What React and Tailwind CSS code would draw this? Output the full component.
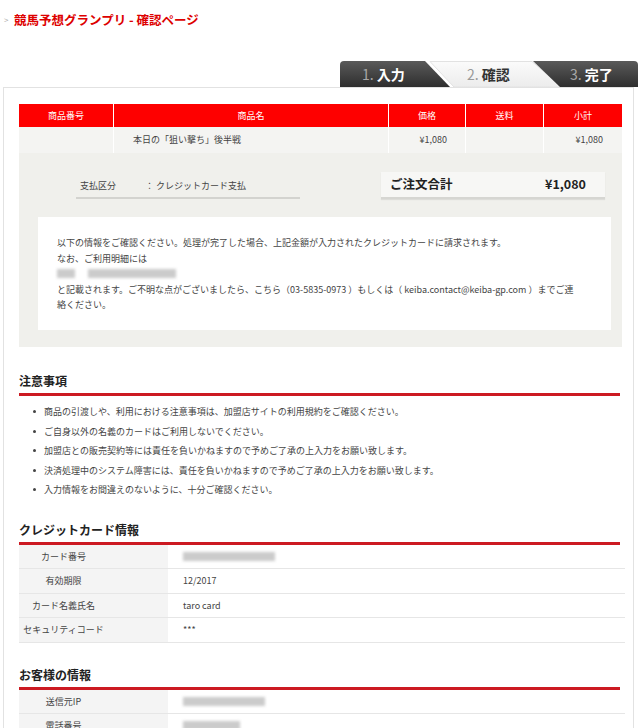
import React from 'react';

const font = { fontFamily: '"Noto Sans CJK JP", "Noto Sans", sans-serif' };

function Blur({ w, className = '' }) {
  return <span className={`inline-block h-[9px] bg-[#cbcbcb] blur-[1.5px] ${className}`} style={{ width: w }} />;
}

function Tabs() {
  return (
    <div className="relative ml-auto mr-[2px] w-[298px] h-[26px]">
      <svg width="298" height="26" className="absolute inset-0">
        <defs>
          <linearGradient id="dk" x1="0" y1="0" x2="0" y2="1">
            <stop offset="0" stopColor="#5a5a5a" />
            <stop offset="1" stopColor="#2e2e2e" />
          </linearGradient>
          <linearGradient id="lt" x1="0" y1="0" x2="0" y2="1">
            <stop offset="0" stopColor="#fbfbfb" />
            <stop offset="1" stopColor="#ececec" />
          </linearGradient>
        </defs>
        <path d="M90 0.5 L192 0.5 L222 26 L114 26 Z" fill="url(#lt)" stroke="#e2e2e2" />
        <path d="M0 26 L0 4 Q0 0 4 0 L85 0 L110 26 Z" fill="url(#dk)" />
        <path d="M193 0 L294 0 Q298 0 298 4 L298 26 L220 26 Z" fill="url(#dk)" />
      </svg>
      <span className="absolute left-[22px] top-[4px] text-[14px] leading-[18px]">
        <span className="text-[#a8a8a8]">1. </span>
        <span className="text-white font-bold">入力</span>
      </span>
      <span className="absolute left-[127px] top-[4px] text-[14px] leading-[18px]">
        <span className="text-[#9a9a9a]">2. </span>
        <span className="text-[#333] font-bold">確認</span>
      </span>
      <span className="absolute left-[230px] top-[4px] text-[14px] leading-[18px]">
        <span className="text-[#a8a8a8]">3. </span>
        <span className="text-white font-bold">完了</span>
      </span>
    </div>
  );
}

function SectionTitle({ children }) {
  return (
    <div className="mr-[2px]">
      <h2 className="text-[12px] font-bold text-[#222] leading-[16px] pb-[4px]">{children}</h2>
      <div className="h-[3px] bg-[#cc1a22]" />
    </div>
  );
}

function InfoRow({ label, children }) {
  return (
    <div className="flex h-[24.5px] border-b border-[#e6e6e6] text-[9px] text-[#444]">
      <div className="w-[149px] bg-[#f4f4f4] pr-[60px] flex items-center justify-center whitespace-nowrap">{label}</div>
      <div className="flex-1 pl-[15px] flex items-center">{children}</div>
    </div>
  );
}

export default function App() {
  const notes = [
    '商品の引渡しや、利用における注意事項は、加盟店サイトの利用規約をご確認ください。',
    'ご自身以外の名義のカードはご利用しないでください。',
    '加盟店との販売契約等には責任を負いかねますので予めご了承の上入力をお願い致します。',
    '決済処理中のシステム障害には、責任を負いかねますので予めご了承の上入力をお願い致します。',
    '入力情報をお間違えのないように、十分ご確認ください。',
  ];

  return (
    <div className="min-h-screen bg-white" style={font}>
      <div className="flex items-center pt-[12px] pl-[4px] h-[28px]">
        <span className="text-[#aaa] text-[8px] w-[10px]">&gt;</span>
        <h1 className="text-[12.5px] font-bold text-[#dd0000] leading-[16px]">競馬予想グランプリ - 確認ページ</h1>
      </div>

      <div className="mt-[33px]">
        <Tabs />
      </div>

      <div className="ml-[3px] mr-[6px] border border-[#e2e2e2] pt-[16px] pl-[15px] pr-[11px] pb-[10px]">
        {/* order table */}
        <div className="text-[9px]">
          <div className="flex h-[23px] bg-[#fe0000] text-white">
            <div className="w-[95px] flex items-center justify-center border-r border-white">商品番号</div>
            <div className="w-[275px] flex items-center justify-center border-r border-white">商品名</div>
            <div className="w-[77px] flex items-center justify-center border-r border-white">価格</div>
            <div className="w-[78px] flex items-center justify-center border-r border-white">送料</div>
            <div className="flex-1 flex items-center justify-center">小計</div>
          </div>
          <div className="flex h-[26px] bg-[#f4f4f2] text-[#444]">
            <div className="w-[95px] border-r border-white" />
            <div className="w-[275px] flex items-center pl-[19px] border-r border-white">本日の「狙い撃ち」後半戦</div>
            <div className="w-[77px] flex items-center justify-end pr-[18px] border-r border-white">¥1,080</div>
            <div className="w-[78px] border-r border-white" />
            <div className="flex-1 flex items-center justify-end pr-[19px]">¥1,080</div>
          </div>
        </div>

        {/* payment summary */}
        <div className="bg-[#f0f0ec] pt-[19px] pb-[17px]">
          <div className="flex items-start">
            <div className="ml-[57px] mt-[3px] w-[224px] border-b-2 border-[#d3d3cf] h-[24px] flex items-center text-[9px] text-[#444]">
              <span className="pl-[4px] w-[69px]">支払区分</span>
              <span>：&nbsp;クレジットカード支払</span>
            </div>
            <div className="ml-auto mr-[17px] w-[224px] h-[27px] bg-[#f7f7f5] border-b-2 border-[#d6d6d2] shadow-[0_1px_1px_rgba(0,0,0,0.08)] flex items-center justify-between pl-[9px] pr-[19px] text-[12.5px] font-bold text-[#222]">
              <span>ご注文合計</span>
              <span>¥1,080</span>
            </div>
          </div>
          <div className="mt-[18px] ml-[19px] mr-[11px] bg-white h-[113px] pt-[18px] pl-[19px] pr-[32px] text-[9px] leading-[15.5px] text-[#444]">
            <p>以下の情報をご確認ください。処理が完了した場合、上記金額が入力されたクレジットカードに請求されます。</p>
            <p>なお、ご利用明細には</p>
            <p className="flex items-center h-[15.5px] gap-[13px]">
              <Blur w={18} />
              <Blur w={88} />
            </p>
            <p>と記載されます。ご不明な点がございましたら、こちら（03-5835-0973 ）もしくは（ keiba.contact@keiba-gp.com ）までご連絡ください。</p>
          </div>
        </div>

        {/* notes */}
        <div className="mt-[26px]">
          <SectionTitle>注意事項</SectionTitle>
          <ul className="pt-[6px] text-[9px] text-[#444]">
            {notes.map((n) => (
              <li key={n} className="flex items-center h-[19.5px]">
                <span className="ml-[14px] mr-[8px] w-[3px] h-[3px] rounded-full bg-[#444]" />
                {n}
              </li>
            ))}
          </ul>
        </div>

        {/* credit card */}
        <div className="mt-[22px]">
          <SectionTitle>クレジットカード情報</SectionTitle>
          <div className="mr-[-3px]">
            <InfoRow label="カード番号"><Blur w={92} /></InfoRow>
            <InfoRow label="有効期限">12/2017</InfoRow>
            <InfoRow label="カード名義氏名">taro card</InfoRow>
            <InfoRow label="セキュリティコード">***</InfoRow>
          </div>
        </div>

        {/* customer */}
        <div className="mt-[24px]">
          <SectionTitle>お客様の情報</SectionTitle>
          <div className="mr-[-3px]">
            <InfoRow label="送信元IP"><Blur w={82} /></InfoRow>
            <InfoRow label="電話番号"><Blur w={57} /></InfoRow>
            <InfoRow label="メールアドレス"><Blur w={120} /></InfoRow>
          </div>
        </div>
      </div>
    </div>
  );
}
